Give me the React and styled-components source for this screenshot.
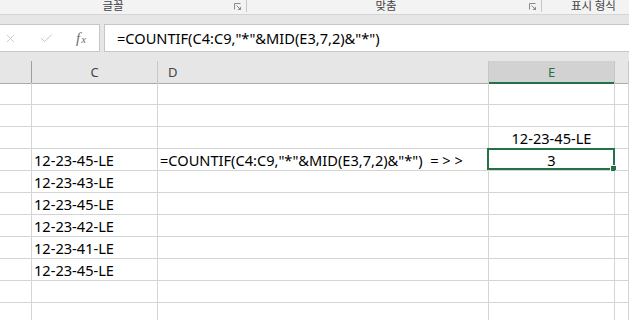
import React from "react";
import styled, { createGlobalStyle } from "styled-components";
import { X, Check } from "lucide-react";

const Global = createGlobalStyle`
  html, body { margin: 0; padding: 0; background: #ffffff; }
  body { width: 629px; height: 320px; overflow: hidden; font-family: "Noto Sans", "Noto Sans CJK KR", sans-serif; }
  * { box-sizing: border-box; }
`;

const Window = styled.div`
  width: 629px;
  height: 320px;
  overflow: hidden;
  display: flex;
  flex-direction: column;
  background: #ffffff;
`;

const Ribbon = styled.div`
  height: 15px;
  flex: none;
  display: flex;
  background: #f3f3f3;
  border-bottom: 1px solid #d5d5d5;
  overflow: hidden;
`;

const Group = styled.div`
  width: ${(p) => p.$w}px;
  flex: none;
  display: flex;
  align-items: flex-start;
  border-right: ${(p) => (p.$sep ? "1px solid #c8c8c8" : "none")};
  height: 12px;
`;

const GroupLabel = styled.div`
  flex: 1;
  text-align: ${(p) => p.$align || "center"};
  padding-left: ${(p) => p.$pl || 0}px;
  padding-right: ${(p) => p.$pr || 0}px;
  font-family: "Noto Sans CJK KR", sans-serif;
  font-size: 11.5px;
  line-height: 12px;
  margin-top: -1px;
  color: #444444;
  white-space: nowrap;
`;

const Launcher = styled.svg`
  width: 7px;
  height: 7px;
  margin: 3px 5px 0 0;
  flex: none;
`;

const FormulaArea = styled.div`
  flex: none;
  height: 46px;
  background: #e6e6e6;
  padding: 9px 0 9px 0;
  display: flex;
  gap: 4px;
`;

const IconBox = styled.div`
  width: 101px;
  margin-left: -1px;
  height: 28px;
  background: #ffffff;
  border: 1px solid #c6c6c6;
  display: flex;
  align-items: center;
  color: #b8b8b8;
`;

const IconSlot = styled.div`
  width: ${(p) => p.$w}px;
  display: flex;
  justify-content: center;
  align-items: center;
`;

const Fx = styled.span`
  font-family: "Liberation Serif", "DejaVu Serif", serif;
  font-style: italic;
  color: #6e6e6e;
  font-size: 15px;
  line-height: 1;
  & > small {
    font-size: 11px;
    margin-left: 1px;
  }
`;

const FormulaInput = styled.div`
  flex: 1;
  height: 28px;
  background: #ffffff;
  border: 1px solid #c6c6c6;
  border-right: none;
  padding-left: 12px;
  display: flex;
  align-items: center;
  font-size: 14.6px;
  color: #000;
  white-space: pre;
`;

const Sheet = styled.div`
  flex: 1;
  display: grid;
  grid-template-columns: 32px 126px 331px 126px 1fr;
  grid-auto-rows: 22px;
  background: #ffffff;
`;

const ColHead = styled.div`
  height: 23px;
  background: ${(p) => (p.$sel ? "#d2d2d2" : "#e6e6e6")};
  border-right: 1px solid ${(p) => p.$edge || "#c6c6c6"};
  border-bottom: ${(p) => (p.$sel ? "2px solid #217346" : "1px solid #ababab")};
  display: flex;
  align-items: center;
  justify-content: ${(p) => (p.$left ? "flex-start" : "center")};
  padding-left: ${(p) => (p.$left ? "10px" : "0")};
  padding-top: ${(p) => (p.$sel ? "1px" : "0")};
  font-size: 13px;
  color: ${(p) => (p.$sel ? "#217346" : "#444444")};
`;

const Cell = styled.div`
  position: relative;
  border-right: 1px solid #d4d4d4;
  border-bottom: 1px solid #d4d4d4;
  font-size: 14.6px;
  line-height: 21px;
  padding-top: 1px;
  color: #000000;
  white-space: pre;
  overflow: visible;
  text-align: ${(p) => (p.$center ? "center" : "left")};
  padding-left: ${(p) => (p.$center ? "0" : "2px")};
  border-right-color: ${(p) => (p.$spill ? "transparent" : "#d4d4d4")};
  z-index: ${(p) => (p.$spill ? 1 : 0)};
`;

const Selection = styled.div`
  position: absolute;
  left: -2px;
  top: -1px;
  right: -1px;
  bottom: 0;
  border: 2px solid #217346;
  pointer-events: none;
`;

const Handle = styled.div`
  position: absolute;
  right: -4px;
  bottom: -4px;
  width: 7px;
  height: 7px;
  background: #217346;
  border: 1px solid #ffffff;
`;

const cVals = {
  4: "12-23-45-LE",
  5: "12-23-43-LE",
  6: "12-23-45-LE",
  7: "12-23-42-LE",
  8: "12-23-41-LE",
  9: "12-23-45-LE",
};

const formula = '=COUNTIF(C4:C9,"*"&MID(E3,7,2)&"*")';

function LauncherIcon() {
  return (
    <Launcher viewBox="0 0 7 7">
      <path d="M0.5 6.5V0.5H6.5" fill="none" stroke="#8a8a8a" strokeWidth="1" />
      <path d="M2.5 2.5L6 6" fill="none" stroke="#8a8a8a" strokeWidth="1" />
      <path d="M7 3.5V7H3.5Z" fill="#8a8a8a" />
    </Launcher>
  );
}

export default function App() {
  const rows = [];
  for (let r = 1; r <= 11; r++) {
    rows.push(
      <React.Fragment key={r}>
        <Cell />
        <Cell>{cVals[r] || ""}</Cell>
        <Cell $spill={r === 4}>{r === 4 ? `${formula}  = > >` : ""}</Cell>
        <Cell $center>
          {r === 3 ? "12-23-45-LE" : r === 4 ? "3" : ""}
          {r === 4 && (
            <Selection>
              <Handle />
            </Selection>
          )}
        </Cell>
        <Cell />
      </React.Fragment>
    );
  }
  return (
    <>
      <Global />
      <Window>
        <Ribbon>
          <Group $w={247} $sep>
            <GroupLabel $pr={8}>글꼴</GroupLabel>
            <LauncherIcon />
          </Group>
          <Group $w={295} $sep>
            <GroupLabel $pr={4}>맞춤</GroupLabel>
            <LauncherIcon />
          </Group>
          <Group $w={100}>
            <GroupLabel $align="left" $pl={29}>표시 형식</GroupLabel>
          </Group>
        </Ribbon>
        <FormulaArea>
          <IconBox>
            <IconSlot $w={20}>
              <X size={13} strokeWidth={1.3} />
            </IconSlot>
            <IconSlot $w={52}>
              <Check size={15} strokeWidth={1.3} />
            </IconSlot>
            <IconSlot $w={18}>
              <Fx>
                f<small>x</small>
              </Fx>
            </IconSlot>
          </IconBox>
          <FormulaInput>{formula}</FormulaInput>
        </FormulaArea>
        <Sheet>
          <ColHead $edge="#9f9f9f" />
          <ColHead>C</ColHead>
          <ColHead $left>D</ColHead>
          <ColHead $sel>E</ColHead>
          <ColHead />
          {rows}
        </Sheet>
      </Window>
    </>
  );
}
